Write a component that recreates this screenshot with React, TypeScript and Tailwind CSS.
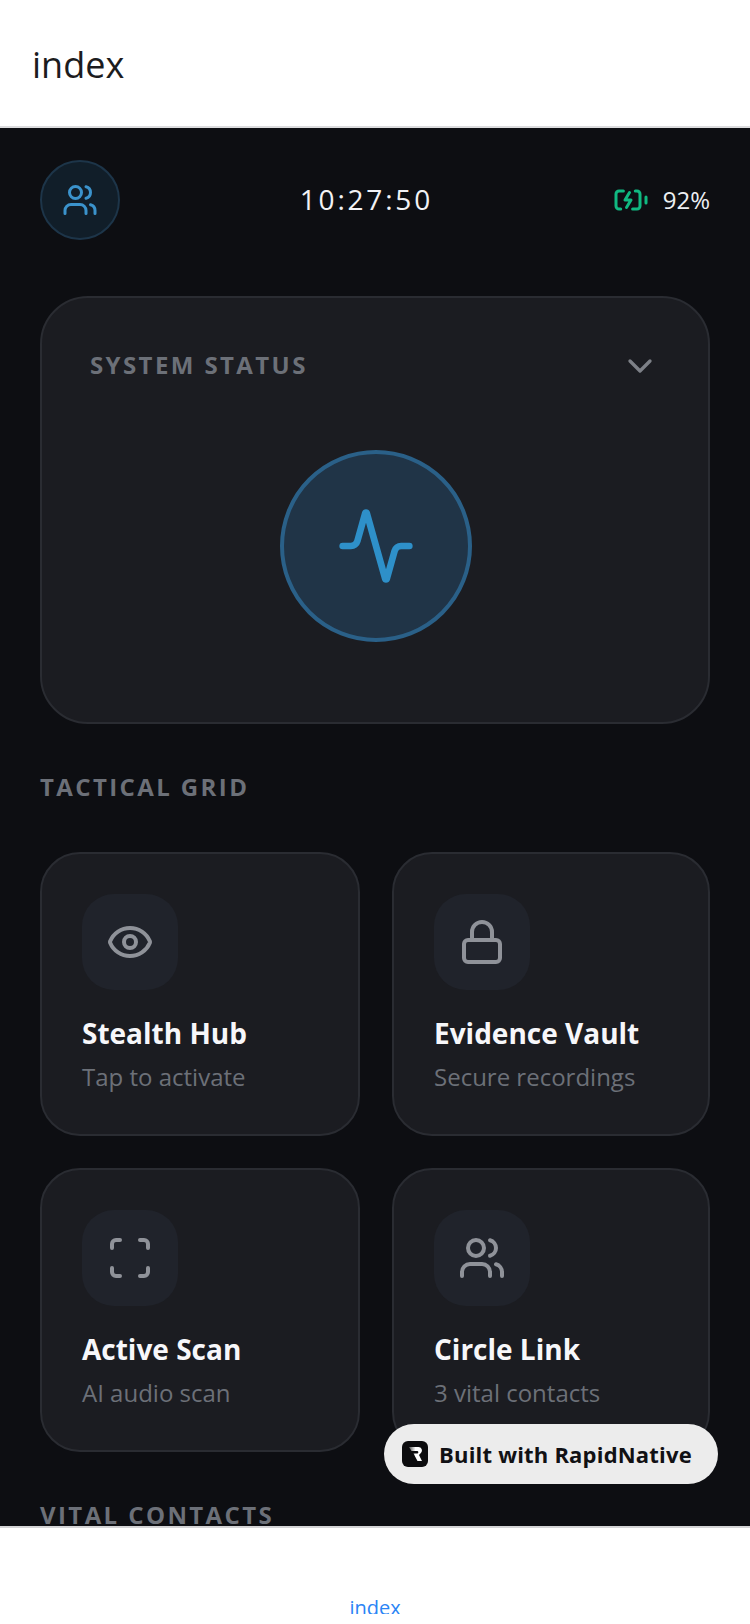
import React from "react";
import { Users, BatteryCharging, ChevronDown, Activity, Eye, Lock, Scan } from "lucide-react";

const cards = [
  { icon: Eye, title: "Stealth Hub", sub: "Tap to activate" },
  { icon: Lock, title: "Evidence Vault", sub: "Secure recordings" },
  { icon: Scan, title: "Active Scan", sub: "AI audio scan" },
  { icon: Users, title: "Circle Link", sub: "3 vital contacts" },
];

function Card({ icon: Icon, title, sub }: { icon: React.ElementType; title: string; sub: string }) {
  return (
    <div className="h-[284px] rounded-[40px] border-2 border-[#2a2c32] bg-[#1b1c21] p-[40px]">
      <div className="flex h-[96px] w-[96px] items-center justify-center rounded-[32px] bg-[#20232b]">
        <Icon size={48} strokeWidth={2} className="text-[#8f9299]" />
      </div>
      <div className="mt-[23px] text-[28px] leading-[40px] font-bold text-[#f7f7fa]">{title}</div>
      <div className="mt-[6px] text-[24px] leading-[36px] text-[#6c7078]">{sub}</div>
    </div>
  );
}

export default function App() {
  return (
    <div className="flex h-[1624px] w-[750px] flex-col overflow-hidden bg-white font-['Open_Sans',sans-serif]">
      <header className="flex h-[128px] shrink-0 items-center border-b-2 border-[#dcdcde] px-[32px] pt-[4px]">
        <span className="text-[36px] leading-[48px] text-[#1c1c1e]">index</span>
      </header>

      <main className="relative h-[1398px] shrink-0 overflow-hidden bg-[#0d0e12] px-[40px]">
        <div className="mt-[32px] flex h-[80px] items-center justify-between">
          <div className="flex h-[80px] w-[80px] items-center justify-center rounded-full border-2 border-[#1d3549] bg-[#111e29]">
            <Users size={36} strokeWidth={2} className="text-[#3b93cc]" />
          </div>
          <span className="mb-[3px] text-[28px] leading-[40px] font-normal tracking-[2.8px] text-[#f2f2f5]">10:27:50</span>
          <div className="flex items-center gap-[14px]">
            <BatteryCharging size={36} strokeWidth={2} className="text-[#10b981]" />
            <span className="text-[24px] leading-[32px] text-[#eceef2]">92%</span>
          </div>
        </div>

        <section className="mt-[56px] h-[428px] rounded-[48px] border-2 border-[#2a2c32] bg-[#1b1c21] px-[48px] pt-[48px]">
          <div className="flex h-[40px] items-center justify-between">
            <span className="mb-[2px] text-[24px] leading-[36px] font-bold tracking-[2.4px] text-[#6c7078]">SYSTEM STATUS</span>
            <ChevronDown size={40} strokeWidth={2} className="text-[#7d8087]" />
          </div>
          <div className="mt-[64px] flex justify-center pl-[2px]">
            <div className="flex h-[192px] w-[192px] items-center justify-center rounded-full border-4 border-[#2a6088] bg-[#203447]">
              <Activity size={80} strokeWidth={2} className="text-[#2e90c9]" />
            </div>
          </div>
        </section>

        <h2 className="mt-[45px] text-[24px] leading-[36px] font-bold tracking-[2.4px] text-[#6c7078]">TACTICAL GRID</h2>

        <div className="mt-[47px] grid grid-cols-[320px_318px] gap-[32px]">
          {cards.map((c) => (
            <Card key={c.title} {...c} />
          ))}
        </div>

        <h2 className="mt-[45px] text-[24px] leading-[36px] font-bold tracking-[2.4px] text-[#6c7078]">VITAL CONTACTS</h2>

        <div className="absolute left-[384px] top-[1296px] flex h-[60px] w-[334px] items-center gap-[11px] rounded-full bg-[#ececec] pl-[18px]">
          <svg width="26" height="26" viewBox="0 0 26 26" aria-hidden="true">
            <defs>
              <linearGradient id="rn" x1="0" x2="1" y1="0" y2="0">
                <stop offset="0" stopColor="#555" />
                <stop offset="0.5" stopColor="#fff" />
              </linearGradient>
            </defs>
            <rect width="26" height="26" rx="6" fill="#0c0c0e" />
            <path d="M7 6h9.5a3.5 3.5 0 0 1 2.6 5.8L17 14l3 6h-4.5l-4-7.5h3.6a.9.9 0 0 0 0-2.5H9.5z" fill="url(#rn)" />
          </svg>
          <span className="text-[22px] leading-[32px] font-bold tracking-[0.2px] text-[#111114]">Built with RapidNative</span>
        </div>
      </main>

      <footer className="flex flex-1 justify-center overflow-hidden border-t-2 border-[#d4d4d6]">
        <span className="mt-[66px] block h-[20px] overflow-hidden text-[20px] leading-[28px] text-[#2a84f5]">index</span>
      </footer>
    </div>
  );
}
